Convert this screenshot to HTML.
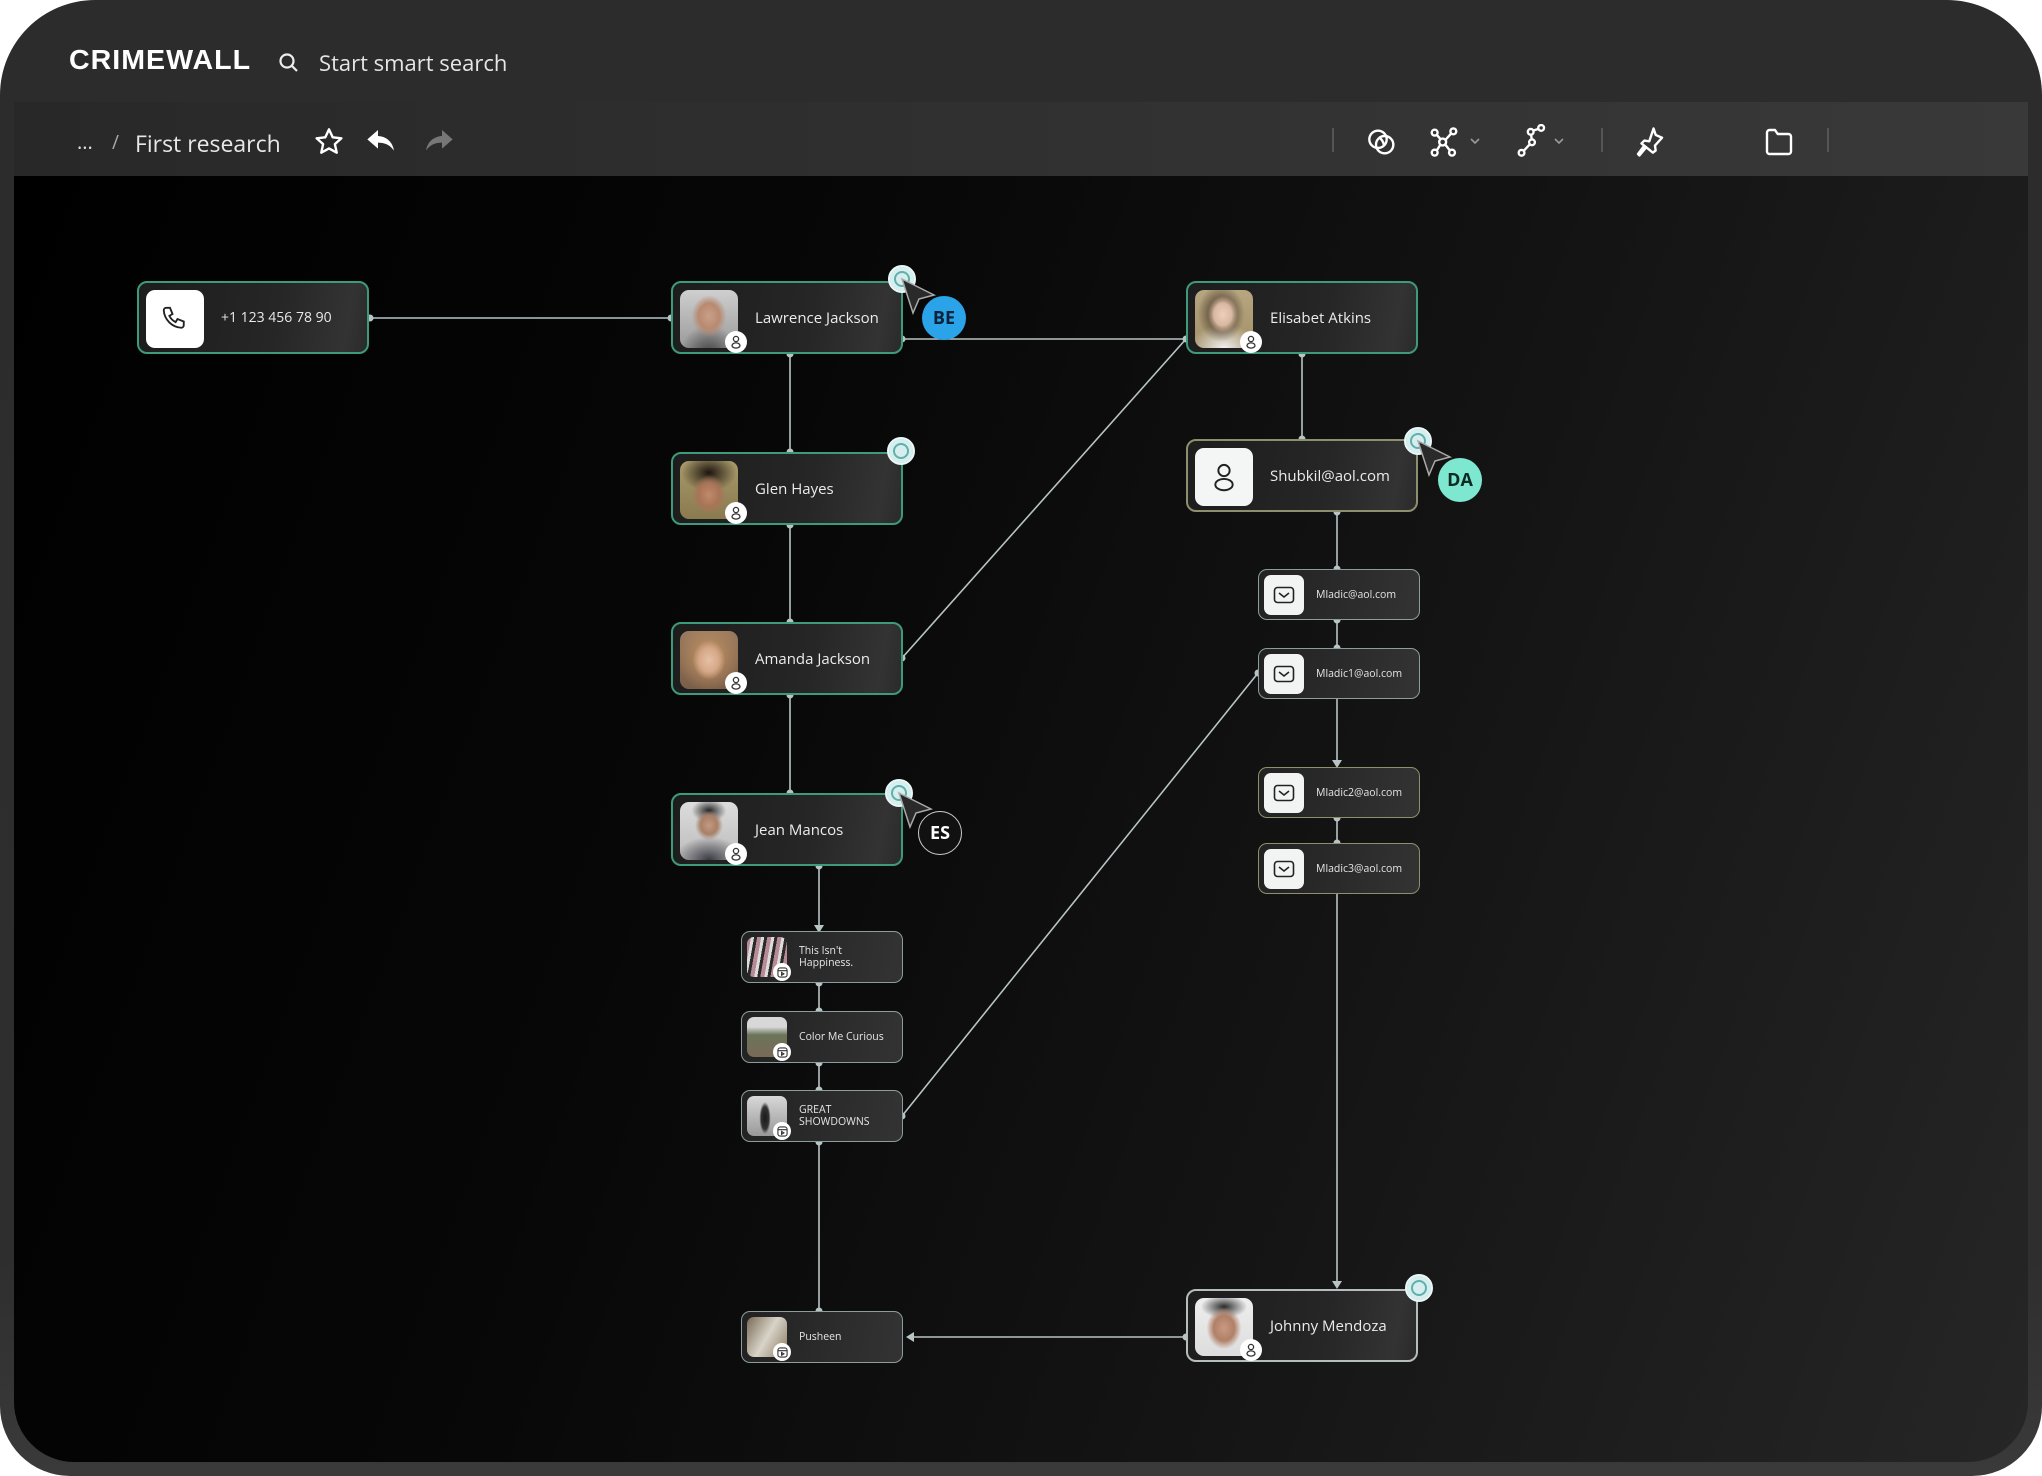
<!DOCTYPE html>
<html><head><meta charset="utf-8"><style>
*{margin:0;padding:0;box-sizing:border-box}
body{width:2042px;height:1476px;background:#fff;position:relative;overflow:hidden;font-family:"Open Sans","Liberation Sans",sans-serif}
.frame{position:absolute;left:0;top:0;width:2042px;height:1476px;border-radius:95px 95px 70px 70px;background:linear-gradient(180deg,#2c2c2c 0%,#2e2e2e 85%,#3a3a3a 100%)}
.toolbar{position:absolute;left:14px;top:102px;width:2014px;height:74px;background:linear-gradient(90deg,#282828,#323232 60%,#393939)}
.canvas{position:absolute;left:14px;top:176px;width:2014px;height:1286px;border-radius:0 0 60px 60px;background:linear-gradient(110deg,#000 0%,#070707 35%,#141414 65%,#262626 100%);overflow:hidden}
.t{position:absolute;color:#e8e8e8;white-space:nowrap}
.node{position:absolute;border-radius:10px;background:linear-gradient(100deg,#1d1d1d,#262626 60%,#333 90%,#2a2a2a);border:2px solid #3d9a7b}
.node .nm{position:absolute;left:82px;top:0;height:100%;display:flex;align-items:center;color:#ececec;font-size:15px}
.av{position:absolute;left:7px;top:7px;width:58px;height:58px;border-radius:9px;overflow:hidden}
.badge{position:absolute;width:22px;height:22px;border-radius:50%;background:#fff;display:flex;align-items:center;justify-content:center}
.small{position:absolute;border-radius:9px;background:linear-gradient(100deg,#222,#2c2c2c 60%,#333);border:1.5px solid #8a9e9c}
.small.y{border-color:#8e8f6c}
.small .nm{position:absolute;left:57px;top:0;height:100%;display:flex;align-items:center;color:#e6e6e6;font-size:10.5px;line-height:12px}
.sav{position:absolute;left:5px;top:5px;width:40px;height:40px;border-radius:7px;overflow:hidden}
.mail{position:absolute;left:5px;top:5px;width:40px;height:40px;border-radius:7px;background:#f2f4f4;display:flex;align-items:center;justify-content:center}
.ring{position:absolute;width:28px;height:28px;border-radius:50%;background:#d6eeee;border:2px solid #eaf7f7;box-shadow:inset 0 0 0 4px #d6eeee,inset 0 0 0 6px #5fb0ad}
.av2{position:absolute;width:44px;height:44px;border-radius:50%;display:flex;align-items:center;justify-content:center;font-weight:bold;font-size:18px}
</style></head><body>
<div class="frame"></div>
<div class="t" style="left:69px;top:44px;font-size:28px;font-weight:900;letter-spacing:1px;color:#fff;font-family:'Liberation Sans',sans-serif;transform:scaleX(1.02);transform-origin:left">CRIMEWALL</div>
<svg style="position:absolute;left:278px;top:52px" width="22" height="22" viewBox="0 0 22 22" fill="none" stroke="#eee" stroke-width="2.2"><circle cx="9" cy="9" r="6.5"/><path d="M14 14l5 5"/></svg>
<div class="t" style="left:319px;top:48px;font-size:22px;color:#e6e6e6">Start smart search</div>
<div class="toolbar"></div>
<div class="t" style="left:77px;top:128px;font-size:20px;color:#ddd">...</div>
<div class="t" style="left:112px;top:129px;font-size:19px;color:#aaa">/</div>
<div class="t" style="left:135px;top:127px;font-size:23px;color:#e8e8e8">First research</div>
<svg style="position:absolute;left:313px;top:126px" width="32" height="32" viewBox="0 0 24 24" fill="none" stroke="#fff" stroke-width="1.8" stroke-linejoin="round"><path d="M12 2.5l2.8 6 6.5.7-4.9 4.4 1.4 6.4L12 16.8 6.2 20l1.4-6.4L2.7 9.2l6.5-.7z"/></svg>
<svg style="position:absolute;left:366px;top:128px" width="32" height="28" viewBox="0 0 24 20"><path d="M9 1L1 8l8 7v-4.5c5 0 9 1.5 12 6-1-6-5-10.5-12-11z" fill="#fff"/></svg>
<svg style="position:absolute;left:422px;top:128px" width="32" height="28" viewBox="0 0 24 20"><path d="M15 1l8 7-8 7v-4.5c-5 0-9 1.5-12 6 1-6 5-10.5 12-11z" fill="#777"/></svg>
<div style="position:absolute;left:1332px;top:128px;width:2px;height:24px;background:#555"></div>
<svg style="position:absolute;left:1366px;top:126px" width="32" height="32" viewBox="0 0 24 24" fill="none" stroke="#fff" stroke-width="1.8"><circle cx="9" cy="10" r="6.5"/><circle cx="14" cy="14" r="6.5"/><path d="M9.5 8.5c2 1 3.5 3 4 6" fill="#fff"/></svg>
<svg style="position:absolute;left:1428px;top:126px" width="32" height="32" viewBox="0 0 24 24" fill="none" stroke="#fff" stroke-width="1.8"><circle cx="5" cy="5" r="2.2"/><circle cx="19" cy="4" r="2.2"/><circle cx="5" cy="20" r="2.2"/><circle cx="18" cy="20" r="2.2"/><circle cx="11" cy="12" r="2.6"/><path d="M6.5 6.5l3 3.5M17.5 5.5l-4.5 5M6.5 18.5l2.8-4.5M16.5 18.5l-3.5-4.5"/></svg>
<svg style="position:absolute;left:1468px;top:134px" width="14" height="14" viewBox="0 0 14 14" fill="none" stroke="#999" stroke-width="1.6"><path d="M3 5l4 4 4-4"/></svg>
<svg style="position:absolute;left:1516px;top:124px" width="32" height="34" viewBox="0 0 24 26" fill="none" stroke="#fff" stroke-width="1.8"><circle cx="4" cy="22" r="2.2"/><circle cx="12" cy="14" r="2.2"/><circle cx="11" cy="6" r="2.2"/><circle cx="19" cy="3" r="2.2"/><path d="M5.7 20.5l4.6-5M11.8 11.8l-.5-3.6M13 5l4-1.3"/></svg>
<svg style="position:absolute;left:1552px;top:134px" width="14" height="14" viewBox="0 0 14 14" fill="none" stroke="#999" stroke-width="1.6"><path d="M3 5l4 4 4-4"/></svg>
<div style="position:absolute;left:1601px;top:128px;width:2px;height:24px;background:#555"></div>
<svg style="position:absolute;left:1633px;top:125px" width="34" height="34" viewBox="0 0 24 24" fill="none" stroke="#fff" stroke-width="1.7" stroke-linejoin="round"><path d="M14.5 2.5l1.5 4.5 4.5 2-5 5.5.5 3.5-2 1.5L6 13l2-2 3.5.5z"/><path d="M9.5 15.5L4.5 21.5 3.5 20.5 8 14.5"/></svg>
<svg style="position:absolute;left:1763px;top:126px" width="32" height="32" viewBox="0 0 24 24" fill="none" stroke="#fff" stroke-width="1.8" stroke-linejoin="round"><path d="M3 5a2 2 0 012-2h4l2 3h8a2 2 0 012 2v11a2 2 0 01-2 2H5a2 2 0 01-2-2z"/></svg>
<div style="position:absolute;left:1827px;top:128px;width:2px;height:24px;background:#555"></div>

<div class="canvas"></div>
<svg style="position:absolute;left:0;top:0" width="2042" height="1476" fill="none" stroke="#b8c4c4" stroke-width="1.6">
<path d="M370 318H671M790 354V452M790 525V622M790 695V793M902 339H1186M902 658L1186 339M1302 354V439M1337 512V569M1337 620V648M1337 699V765M1337 818V843M1337 893V1285M819 866V929M819 983V1011M819 1063V1090M819 1142V1311M902 1116L1258 673M1186 1337H910"/>
<g fill="#b8c4c4" stroke="none">
<circle cx="370" cy="318" r="3.5"/><circle cx="671" cy="318" r="3.5"/><circle cx="790" cy="354" r="3.5"/><circle cx="790" cy="452" r="3.5"/><circle cx="790" cy="525" r="3.5"/><circle cx="790" cy="622" r="3.5"/><circle cx="790" cy="695" r="3.5"/><circle cx="790" cy="793" r="3.5"/><circle cx="902" cy="339" r="3.5"/><circle cx="1186" cy="339" r="3.5"/><circle cx="902" cy="658" r="3.5"/><circle cx="1302" cy="354" r="3.5"/><circle cx="1302" cy="439" r="3.5"/><circle cx="1337" cy="512" r="3.5"/><circle cx="1337" cy="569" r="3.5"/><circle cx="1337" cy="620" r="3.5"/><circle cx="1337" cy="648" r="3.5"/><circle cx="1337" cy="818" r="3.5"/><circle cx="1337" cy="843" r="3.5"/><circle cx="819" cy="866" r="3.5"/><circle cx="819" cy="983" r="3.5"/><circle cx="819" cy="1011" r="3.5"/><circle cx="819" cy="1063" r="3.5"/><circle cx="819" cy="1090" r="3.5"/><circle cx="819" cy="1142" r="3.5"/><circle cx="819" cy="1311" r="3.5"/><circle cx="902" cy="1116" r="3.5"/><circle cx="1258" cy="673" r="3.5"/><circle cx="1186" cy="1337" r="3.5"/>
<path d="M1332 760h10l-5 8zM1332 1281h10l-5 8zM814 925h10l-5 8zM906 1337l8-5v10z"/></g>
</svg>

<!-- phone -->
<div class="node" style="left:137px;top:281px;width:232px;height:73px">
<div style="position:absolute;left:7px;top:7px;width:58px;height:58px;border-radius:9px;background:#fff;display:flex;align-items:center;justify-content:center"><svg width="30" height="30" viewBox="0 0 24 24" fill="none" stroke="#222" stroke-width="1.5"><path d="M5 3h3l2 5-2.5 1.5a11 11 0 005 5L14 12l5 2v3a2 2 0 01-2 2A15 15 0 013 5a2 2 0 012-2z"/></svg></div>
<div class="nm" style="font-size:14px">+1 123 456 78 90</div></div>

<!-- persons -->
<div class="node" style="left:671px;top:281px;width:232px;height:73px"><div class="av" style="background:radial-gradient(ellipse 30% 36% at 50% 45%,#c9a089,#b88a70 60%,transparent 100%),radial-gradient(ellipse 50% 50% at 50% 110%,#444,transparent),linear-gradient(#cfcfcf,#9a9a9a)"></div><div class="badge" style="left:52px;top:48px"><svg width="12" height="14" viewBox="0 0 12 14" fill="none" stroke="#333" stroke-width="1.3"><circle cx="6" cy="4" r="2.6"/><ellipse cx="6" cy="10.5" rx="4" ry="2.6"/></svg></div><div class="nm">Lawrence Jackson</div></div>
<div class="node" style="left:1186px;top:281px;width:232px;height:73px"><div class="av" style="background:radial-gradient(ellipse 26% 32% at 48% 42%,#ecd0bc,#d9b8a0 60%,transparent 100%),radial-gradient(ellipse 45% 55% at 45% 40%,#2a1e18,transparent 90%),radial-gradient(ellipse 60% 40% at 50% 100%,#f0f0f0,transparent),linear-gradient(#b7a680,#a39068)"></div><div class="badge" style="left:52px;top:48px"><svg width="12" height="14" viewBox="0 0 12 14" fill="none" stroke="#333" stroke-width="1.3"><circle cx="6" cy="4" r="2.6"/><ellipse cx="6" cy="10.5" rx="4" ry="2.6"/></svg></div><div class="nm">Elisabet Atkins</div></div>
<div class="node" style="left:671px;top:452px;width:232px;height:73px"><div class="av" style="background:radial-gradient(ellipse 30% 34% at 50% 58%,#c08a6a,#a87458 60%,transparent 100%),radial-gradient(ellipse 50% 35% at 50% 20%,#1e1610,transparent 95%),linear-gradient(#a89a6a,#8a7a50)"></div><div class="badge" style="left:52px;top:48px"><svg width="12" height="14" viewBox="0 0 12 14" fill="none" stroke="#333" stroke-width="1.3"><circle cx="6" cy="4" r="2.6"/><ellipse cx="6" cy="10.5" rx="4" ry="2.6"/></svg></div><div class="nm">Glen Hayes</div></div>
<div class="node" style="left:671px;top:622px;width:232px;height:73px"><div class="av" style="background:radial-gradient(ellipse 28% 34% at 50% 50%,#e6c0a6,#d6a888 60%,transparent 100%),radial-gradient(ellipse 55% 60% at 50% 45%,#c49464,transparent 100%),linear-gradient(#9a7a5e,#7a5e48)"></div><div class="badge" style="left:52px;top:48px"><svg width="12" height="14" viewBox="0 0 12 14" fill="none" stroke="#333" stroke-width="1.3"><circle cx="6" cy="4" r="2.6"/><ellipse cx="6" cy="10.5" rx="4" ry="2.6"/></svg></div><div class="nm">Amanda Jackson</div></div>
<div class="node" style="left:671px;top:793px;width:232px;height:73px"><div class="av" style="background:radial-gradient(ellipse 24% 26% at 50% 40%,#c49a80,#a88068 60%,transparent 100%),radial-gradient(ellipse 30% 20% at 50% 15%,#222,transparent 100%),radial-gradient(ellipse 60% 40% at 50% 100%,#3a3a44,transparent 100%),linear-gradient(#ddd,#bbb)"></div><div class="badge" style="left:52px;top:48px"><svg width="12" height="14" viewBox="0 0 12 14" fill="none" stroke="#333" stroke-width="1.3"><circle cx="6" cy="4" r="2.6"/><ellipse cx="6" cy="10.5" rx="4" ry="2.6"/></svg></div><div class="nm">Jean Mancos</div></div>
<div class="node" style="left:1186px;top:1289px;width:232px;height:73px;border-color:#b5bdbd"><div class="av" style="background:radial-gradient(ellipse 30% 36% at 50% 52%,#c89a80,#b08068 60%,transparent 100%),radial-gradient(ellipse 40% 20% at 50% 15%,#2a2a2a,transparent 100%),linear-gradient(#eee,#ddd)"></div><div class="badge" style="left:52px;top:48px"><svg width="12" height="14" viewBox="0 0 12 14" fill="none" stroke="#333" stroke-width="1.3"><circle cx="6" cy="4" r="2.6"/><ellipse cx="6" cy="10.5" rx="4" ry="2.6"/></svg></div><div class="nm">Johnny Mendoza</div></div>
<div class="node" style="left:1186px;top:439px;width:232px;height:73px;border-color:#8e8f6c"><div style="position:absolute;left:7px;top:7px;width:58px;height:58px;border-radius:9px;background:#f4f6f6;display:flex;align-items:center;justify-content:center"><svg width="26" height="32" viewBox="0 0 12 14" fill="none" stroke="#222" stroke-width="0.9"><circle cx="6" cy="4" r="2.6"/><ellipse cx="6" cy="10.5" rx="4" ry="2.6"/></svg></div><div class="nm">Shubkil@aol.com</div></div>

<!-- emails -->
<div class="small" style="left:1258px;top:569px;width:162px;height:51px"><div class="mail"><svg width="22" height="18" viewBox="0 0 22 18" fill="none" stroke="#222" stroke-width="1.6"><rect x="1.5" y="1.5" width="19" height="15" rx="3"/><path d="M6 7l5 4 5-4"/></svg></div><div class="nm">Mladic@aol.com</div></div>
<div class="small" style="left:1258px;top:648px;width:162px;height:51px"><div class="mail"><svg width="22" height="18" viewBox="0 0 22 18" fill="none" stroke="#222" stroke-width="1.6"><rect x="1.5" y="1.5" width="19" height="15" rx="3"/><path d="M6 7l5 4 5-4"/></svg></div><div class="nm">Mladic1@aol.com</div></div>
<div class="small y" style="left:1258px;top:767px;width:162px;height:51px"><div class="mail"><svg width="22" height="18" viewBox="0 0 22 18" fill="none" stroke="#222" stroke-width="1.6"><rect x="1.5" y="1.5" width="19" height="15" rx="3"/><path d="M6 7l5 4 5-4"/></svg></div><div class="nm">Mladic2@aol.com</div></div>
<div class="small y" style="left:1258px;top:843px;width:162px;height:51px"><div class="mail"><svg width="22" height="18" viewBox="0 0 22 18" fill="none" stroke="#222" stroke-width="1.6"><rect x="1.5" y="1.5" width="19" height="15" rx="3"/><path d="M6 7l5 4 5-4"/></svg></div><div class="nm">Mladic3@aol.com</div></div>

<!-- media -->
<div class="small" style="left:741px;top:931px;width:162px;height:52px"><div class="sav" style="background:repeating-linear-gradient(100deg,#b88a96 0 4px,#ddd 4px 7px,#2a2a2a 7px 10px)"></div><div class="badge" style="left:31px;top:31px;width:18px;height:18px"><svg width="11" height="11" viewBox="0 0 12 12" fill="none" stroke="#333" stroke-width="1.2"><rect x="1" y="1" width="10" height="10" rx="2.5"/><path d="M1 4h10M5 6l2.5 1.5L5 9z"/></svg></div><div class="nm">This Isn't<br>Happiness.</div></div>
<div class="small" style="left:741px;top:1011px;width:162px;height:52px"><div class="sav" style="background:linear-gradient(180deg,#d8d8d8 0 25%,#6a7458 45%,#7a6a58 100%)"></div><div class="badge" style="left:31px;top:31px;width:18px;height:18px"><svg width="11" height="11" viewBox="0 0 12 12" fill="none" stroke="#333" stroke-width="1.2"><rect x="1" y="1" width="10" height="10" rx="2.5"/><path d="M1 4h10M5 6l2.5 1.5L5 9z"/></svg></div><div class="nm">Color Me Curious</div></div>
<div class="small" style="left:741px;top:1090px;width:162px;height:52px"><div class="sav" style="background:radial-gradient(ellipse 14% 40% at 45% 55%,#1a1a1a,#333 70%,transparent 100%),linear-gradient(#d8d8d8,#999)"></div><div class="badge" style="left:31px;top:31px;width:18px;height:18px"><svg width="11" height="11" viewBox="0 0 12 12" fill="none" stroke="#333" stroke-width="1.2"><rect x="1" y="1" width="10" height="10" rx="2.5"/><path d="M1 4h10M5 6l2.5 1.5L5 9z"/></svg></div><div class="nm">GREAT<br>SHOWDOWNS</div></div>
<div class="small" style="left:741px;top:1311px;width:162px;height:52px"><div class="sav" style="background:linear-gradient(120deg,#7a6a55,#d8d4c8 50%,#8a7a60)"></div><div class="badge" style="left:31px;top:31px;width:18px;height:18px"><svg width="11" height="11" viewBox="0 0 12 12" fill="none" stroke="#333" stroke-width="1.2"><rect x="1" y="1" width="10" height="10" rx="2.5"/><path d="M1 4h10M5 6l2.5 1.5L5 9z"/></svg></div><div class="nm">Pusheen</div></div>

<!-- collaborators -->
<div class="ring" style="left:888px;top:265px"></div>
<svg style="position:absolute;left:900px;top:277px" width="40" height="40" viewBox="0 0 40 40"><path d="M2 2L34 18 19 22 13 36z" fill="#2a2a2a" stroke="#aaa" stroke-width="1.5"/></svg>
<div class="av2" style="left:922px;top:296px;background:#2aa3e8;color:#0c2238">BE</div>
<div class="ring" style="left:887px;top:437px"></div>
<div class="ring" style="left:885px;top:779px"></div>
<svg style="position:absolute;left:897px;top:791px" width="40" height="40" viewBox="0 0 40 40"><path d="M2 2L34 18 19 22 13 36z" fill="#2a2a2a" stroke="#aaa" stroke-width="1.5"/></svg>
<div class="av2" style="left:918px;top:811px;background:#111;color:#fff;border:1.5px solid #ccc">ES</div>
<div class="ring" style="left:1404px;top:427px"></div>
<svg style="position:absolute;left:1416px;top:439px" width="40" height="40" viewBox="0 0 40 40"><path d="M2 2L34 18 19 22 13 36z" fill="#2a2a2a" stroke="#aaa" stroke-width="1.5"/></svg>
<div class="av2" style="left:1438px;top:458px;background:#7de8cf;color:#0d2a24">DA</div>
<div class="ring" style="left:1405px;top:1274px"></div>
</body></html>
